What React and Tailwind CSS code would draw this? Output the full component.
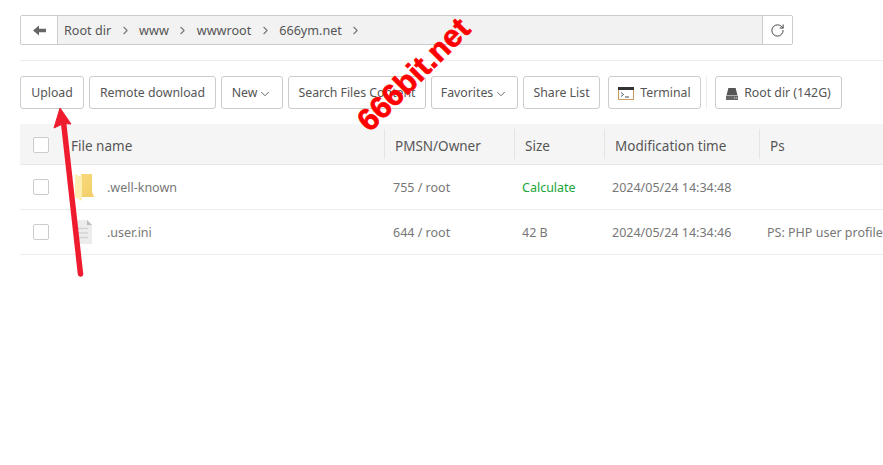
import React from 'react';
import { ChevronRight, ChevronDown, RotateCw } from 'lucide-react';

const crumbs = ['Root dir', 'www', 'wwwroot', '666ym.net'];

function Btn({ className = '', children }) {
  return (
    <div className={`h-[33px] flex items-center justify-center border border-[#ccc] rounded-[3px] bg-white pt-[2px] text-[12.3px] text-[#555] whitespace-nowrap ${className}`}>
      {children}
    </div>
  );
}

function BackIcon() {
  return (
    <svg width="13" height="11" viewBox="0 0 13 11">
      <path d="M0 5.5 L6 0.5 V3.8 H13 V7.2 H6 V10.5 Z" fill="#666" />
    </svg>
  );
}

function TerminalIcon() {
  return (
    <svg width="16" height="13" viewBox="0 0 16 13" className="mr-[6px]">
      <rect x="0.5" y="0.5" width="15" height="12" fill="#fff" stroke="#c99a5b" />
      <rect x="0" y="0" width="16" height="3" fill="#333" />
      <path d="M3 5.5 L5.5 7.5 L3 9.5" fill="none" stroke="#444" strokeWidth="0.9" />
      <path d="M7 10 H11" stroke="#444" strokeWidth="1" />
    </svg>
  );
}

function DiskIcon() {
  return (
    <svg width="12" height="12" viewBox="0 0 12 12" className="mr-[6px]">
      <path d="M2.4 0 H9.6 L11.4 7 H0.6 Z" fill="#555" />
      <rect x="0" y="7.6" width="12" height="4.4" rx="0.5" fill="#666" />
      <rect x="8" y="9.4" width="1.2" height="1" fill="#ddd" />
      <rect x="10" y="9.4" width="1.2" height="1" fill="#ddd" />
    </svg>
  );
}

function FolderIcon() {
  return (
    <svg width="20" height="29" viewBox="0 0 20 29">
      <defs>
        <linearGradient id="folderBack" x1="0" y1="0" x2="1" y2="1">
          <stop offset="0" stopColor="#f8dc7e" />
          <stop offset="1" stopColor="#f3cd68" />
        </linearGradient>
      </defs>
      <path d="M1 1 H18 V19 L20 24 H7 V1 Z" fill="url(#folderBack)" />
      <path d="M1 1 L8 4 V28 L1 24 Z" fill="#fdeeb4" />
    </svg>
  );
}

function FileIcon() {
  return (
    <svg width="18" height="24" viewBox="0 0 18 24">
      <path d="M0 0 H13 L18 5 V24 H0 Z" fill="#ececec" />
      <path d="M13 0 L18 5 H13 Z" fill="#bdbdbd" />
      <path d="M3 8.5 H14 M3 13 H14 M3 17.5 H14" stroke="#d2d2d2" strokeWidth="1.4" />
    </svg>
  );
}

function Check() {
  return <div className="w-4 h-4 border border-[#ccc] rounded-[2px] bg-white" />;
}

function HeadCell({ className, children }) {
  return (
    <div className={`h-[30px] flex items-center border-l border-[#e4e4e4] pl-[10px] ${className}`}>
      <span className="mt-[4px]">{children}</span>
    </div>
  );
}

function Row({ icon, name, perm, size, sizeClass = 'text-[#777]', time, ps }) {
  return (
    <div className="flex items-center h-[45px] border-b border-[#ececec] text-[12.5px] text-[#777] whitespace-nowrap">
      <div className="w-[51px] pl-[13px]"><Check /></div>
      <div className="w-[36px] flex justify-start pl-[3px]">{icon}</div>
      <div className="w-[286px] mt-[2px]">{name}</div>
      <div className="w-[129px] mt-[2px]">{perm}</div>
      <div className={`w-[90px] mt-[2px] ${sizeClass}`}>{size}</div>
      <div className="w-[155px] mt-[2px]">{time}</div>
      <div className="mt-[2px]">{ps}</div>
    </div>
  );
}

export default function App() {
  return (
    <div className="relative h-[465px] w-[883px] overflow-hidden bg-white pt-[15px] font-['Noto_Sans',sans-serif]">
      <div className="ml-5 w-[773px] h-[30px] flex border border-[#ccc] rounded-[2px] overflow-hidden">
        <div className="w-[37px] flex items-center justify-center border-r border-[#ccc] bg-white">
          <BackIcon />
        </div>
        <div className="flex-1 flex items-center bg-[#f2f2f2] pl-[6px] pt-[2px] text-[12.6px] text-[#555]">
          {crumbs.map((c) => (
            <div key={c} className="flex items-center">
              <span>{c}</span>
              <ChevronRight size={13} strokeWidth={2} className="text-[#777] mx-[7.5px]" />
            </div>
          ))}
        </div>
        <div className="w-[30px] flex items-center justify-center border-l border-[#ccc] bg-white">
          <RotateCw size={15} strokeWidth={1.6} className="text-[#444]" />
        </div>
      </div>

      <div className="ml-5 mt-[15px] border-t border-[#ececec]" />

      <div className="ml-5 mt-[15px] flex items-center">
        <Btn className="w-[64px]">Upload</Btn>
        <Btn className="w-[127px] ml-[5px]">Remote download</Btn>
        <Btn className="w-[62px] ml-[5px]">New<ChevronDown size={14} strokeWidth={1.5} className="ml-[1px]" /></Btn>
        <Btn className="w-[138px] ml-[5px]">Search Files Content</Btn>
        <Btn className="w-[87px] ml-[5px]">Favorites<ChevronDown size={14} strokeWidth={1.5} className="ml-[1px]" /></Btn>
        <Btn className="w-[77px] ml-[5px]">Share List</Btn>
        <Btn className="w-[93px] ml-[8px]"><TerminalIcon />Terminal</Btn>
        <div className="w-px h-[33px] bg-[#ececec] ml-[5px]" />
        <Btn className="w-[127px] ml-[8px]"><DiskIcon />Root dir (142G)</Btn>
      </div>

      <div className="ml-5 mt-[15px]">
        <div className="h-[41px] flex items-center bg-[#f5f5f5] border-b border-[#e8e8e8] text-[13.5px] text-[#555] whitespace-nowrap">
          <div className="w-[51px] pl-[13px] mt-[2px]"><Check /></div>
          <div className="w-[313px] mt-[4px]">File name</div>
          <HeadCell className="w-[130px]">PMSN/Owner</HeadCell>
          <HeadCell className="w-[90px]">Size</HeadCell>
          <HeadCell className="w-[155px]">Modification time</HeadCell>
          <HeadCell className="flex-1">Ps</HeadCell>
        </div>
        <Row icon={<FolderIcon />} name=".well-known" perm="755 / root" size="Calculate" sizeClass="text-[#20a53a]" time="2024/05/24 14:34:48" ps="" />
        <Row icon={<FileIcon />} name=".user.ini" perm="644 / root" size="42 B" time="2024/05/24 14:34:46" ps="PS: PHP user profile" />
      </div>

      {/* annotations drawn on top of the screenshot */}
      <svg className="absolute left-0 top-0 pointer-events-none" width="883" height="465">
        <path d="M80.5 274 L63.5 122" stroke="#ee1c2e" strokeWidth="5.5" strokeLinecap="round" />
        <path d="M60 108 L71 124 L63.5 123.5 L54 128 Z" fill="#ee1c2e" stroke="#ee1c2e" strokeWidth="1" strokeLinejoin="round" />
      </svg>
      <div className="absolute left-[344px] top-[66px] w-[125px] origin-center -rotate-[45deg] font-['Liberation_Sans',sans-serif] font-bold text-[31px] leading-none text-[#f00] whitespace-nowrap [-webkit-text-stroke:0.7px_#f00]">
        666bit.net
      </div>
    </div>
  );
}
